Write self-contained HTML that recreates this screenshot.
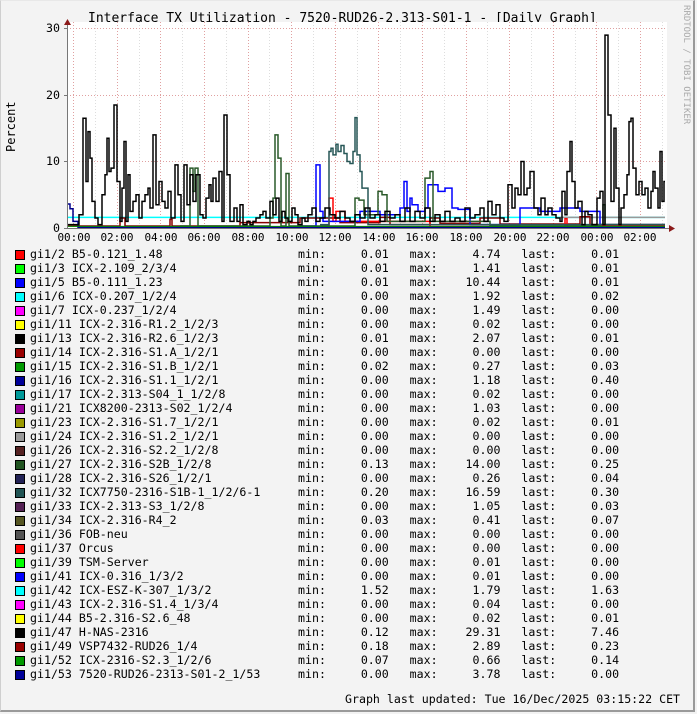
<!DOCTYPE html>
<html><head><meta charset="utf-8"><style>
html,body{margin:0;padding:0}
body{width:697px;height:714px;background:#f3f3f3;position:relative;overflow:hidden;font-family:"DejaVu Sans Mono","Liberation Mono",monospace;font-size:11.6px;color:#000}
.frame{position:absolute;left:0;top:0;width:695px;height:712px;border-right:2px solid #9a9a9a;border-bottom:2px solid #9a9a9a;border-left:1px solid #cfcfcf;border-top:1px solid #e8e8e8;box-sizing:border-box}
.t{position:absolute;white-space:pre;line-height:14px}
.sw{position:absolute;left:15px;width:8px;height:8px;border:1px solid #000}
.r{text-align:right}
.xl{position:absolute;top:231px;width:50px;margin-left:-25px;text-align:center;line-height:14px;font-size:11px}
</style></head><body>
<div class="frame"></div>
<div class="t" style="left:88px;top:12px;font-size:13px">Interface TX Utilization - 7520-RUD26-2.313-S01-1 - [Daily Graph]</div>
<div class="t" style="left:4px;top:152px;font-size:12px;transform:rotate(-90deg);transform-origin:0 0">Percent</div>
<div class="t" style="left:681px;top:5px;font-size:9px;color:#aaa;transform:rotate(90deg) translateY(-10px);transform-origin:0 0;line-height:10px">RRDTOOL / TOBI OETIKER</div>
<svg style="position:absolute;left:0;top:0" width="697" height="714">
<rect x="67" y="22" width="600" height="206" fill="#fff"/>
<g stroke="#ddd" stroke-dasharray="1,2" stroke-width="1">
<path d="M95.5 22V228M117.5 22V228M139.5 22V228M160.5 22V228M182.5 22V228M204.5 22V228M226.5 22V228M248.5 22V228M269.5 22V228M291.5 22V228M313.5 22V228M335.5 22V228M357.5 22V228M378.5 22V228M400.5 22V228M422.5 22V228M444.5 22V228M466.5 22V228M487.5 22V228M509.5 22V228M531.5 22V228M553.5 22V228M575.5 22V228M596.5 22V228M618.5 22V228M640.5 22V228M662.5 22V228"/>
</g>
<g stroke="#e0a0a0" stroke-dasharray="1,2"><path d="M67 28.5H667M67 95.5H667M67 161.5H667"/><path d="M73.5 22V228M117.5 22V228M160.5 22V228M204.5 22V228M248.5 22V228M291.5 22V228M335.5 22V228M378.5 22V228M422.5 22V228M466.5 22V228M509.5 22V228M553.5 22V228M596.5 22V228M640.5 22V228"/></g>
<g transform="translate(0,228) scale(1,-6.65)" fill="none" stroke-width="1.5">
<path vector-effect="non-scaling-stroke" stroke="#0ff" d="M67 1.6H665"/>
<path vector-effect="non-scaling-stroke" stroke="#999" d="M560 1.6H665"/>
<path vector-effect="non-scaling-stroke" stroke="#880000" d="M67 0.3H120V1.5H125V0.3H170V1.3H172V0.3H240V0.8H300V1.5H340V0.8H380V1.6H390V0.5H430V1.5H440V0.7H480V1.5H500V0.6H580V1.7H590V0.5H665"/>
<path vector-effect="non-scaling-stroke" stroke="#f00" d="M320 0.3H329V4.5H333V1H336V2.5H345V1H430V0.2H565V1.4H567V0.3H665"/>
<path vector-effect="non-scaling-stroke" stroke="#00008b" d="M67 3.6H70V2.9H73V1H78V0.1H665"/>
<path vector-effect="non-scaling-stroke" stroke="#00f" d="M300 0.3H316V9.5H320V2.5H323V1H360V2.5H380V2H400V3H404V7H407V2.5H410V4.5H412V3.5H418V2.5H425V3H428V6.5H438V5.5H445V6H452V3H458V2.8H470V0.5H520V3H540V2.5H560V3H580V2.5H600V0.5H665"/>
<path vector-effect="non-scaling-stroke" stroke="#2a5a2a" d="M180 0.3H190V9H193V5.5H195V9H198V0.3H270V1.5H273V4.5H275V14H278V10.5H281V0.3H286V8.2H289V0.3H355V4.5H359V4.2H364V2H378V5.5H382V5H387V1H425V7.5H430V8.5H433V1H490V0.3H600V0.5H603V3.5H605V0.5H665"/>
<path vector-effect="non-scaling-stroke" stroke="#275757" d="M320 0.5H329V11.5H331V12H333V11H336V12.6H338V11.5H341V12.4H344V11.2H347V10H350V9.7H353V11.5H355V16.6H357V11H360V8.5H362V6H368V0.5H665"/>
<path vector-effect="non-scaling-stroke" stroke="#000" d="M67 0.5H73V0.5H79V2H83V16.5H86V7H88V14.5H90V10.5H92V4H95V1.5H98V0.5H102V5H105V8H107V13.5H109V8.5H111V9H114V18.5H117V7H120V1H122V6H124V13H126V1H128V8H130V2.5H133V4H136V5H139V1.5H142V4H145V5H148V6H150V3H153V14H156V3.5H159V7H162V4H165V3H168V5.5H171V1.5H175V9.5H178V5H181V1H184V9.5H187V3.5H190V8H193V4H196V8H200V2H203V1.5H206V4.5H209V6.5H211V4H213V7.5H216V4H219V8.5H222V1H224V17H227V8H230V1H234V3H237V1H240V3.5H243V0.5H247V1H250V0.5H253V1H256V1.5H260V2H263V2.5H266V1.5H270V4H273V2H276V4.5H279V1H282V2.5H285V1.5H288V1H292V3H295V2H298V0.5H302V1.5H305V1H308V2H312V3H316V1H320V1.5H325V3H330V2H335V1.5H340V2.5H345V1.5H350V1H355V2H360V1.5H365V3H370V1.5H375V2H380V1H385V2.5H390V1.5H395V2H400V1H405V3H410V1H415V2.5H420V1.5H425V3H430V1H435V2H440V1H445V2.5H450V1H455V1.5H460V1H465V3H470V1.5H475V2H480V3H484V1H488V4H492V2H496V3.5H500V1.5H504V1H508V6.5H512V3H515V6H518V5H521V10H524V5H527V6H530V8.5H534V3H538V2H541V4.5H545V2H548V3H552V2H556V1.5H560V1H562V5.5H565V2H567V8.5H570V13H572V7H575V3H578V4H582V0.5H585V2.5H588V2H592V0.5H597V4.5H600V5.5H603V0.5H605V29H608V17H611V4H614V15H616V6H619V0.5H621V3H624V5H627V8H629V16H631V16.5H633V9H636V5H639V7H642V5H645V6H648V3H651V5.5H653V8.5H655V6H658V3H660V11.5H662V4H664V7H665"/>
<path vector-effect="non-scaling-stroke" stroke="#080" stroke-width="1" d="M67 0.25H665"/>
</g>
<path d="M67.5 24V229" stroke="#777"/><path d="M64 228.5H670" stroke="#777"/>
<path d="M64 25L67.5 19L71 25Z" fill="#8b1a1a"/><path d="M669 225L675 228.5L669 232Z" fill="#8b1a1a"/>
<g stroke="#777"><path d="M64 28.5H67M64 95.5H67M64 161.5H67"/></g>
</svg>
<div class="t r" style="left:30px;top:21px;width:30px">30</div>
<div class="t r" style="left:30px;top:88px;width:30px">20</div>
<div class="t r" style="left:30px;top:154px;width:30px">10</div>
<div class="t r" style="left:30px;top:221px;width:30px">0</div>
<div class="xl" style="left:74px">00:00</div><div class="xl" style="left:117px">02:00</div><div class="xl" style="left:161px">04:00</div><div class="xl" style="left:204px">06:00</div><div class="xl" style="left:248px">08:00</div><div class="xl" style="left:292px">10:00</div><div class="xl" style="left:335px">12:00</div><div class="xl" style="left:379px">14:00</div><div class="xl" style="left:422px">16:00</div><div class="xl" style="left:466px">18:00</div><div class="xl" style="left:510px">20:00</div><div class="xl" style="left:553px">22:00</div><div class="xl" style="left:597px">00:00</div><div class="xl" style="left:640px">02:00</div>
<div style="position:absolute;left:0;top:247px">
<div class="sw" style="top:3px;background:#f00"></div><div class="sw" style="top:17px;background:#0f0"></div><div class="sw" style="top:31px;background:#00f"></div><div class="sw" style="top:45px;background:#0ff"></div><div class="sw" style="top:59px;background:#f0f"></div><div class="sw" style="top:73px;background:#ff0"></div><div class="sw" style="top:87px;background:#000"></div><div class="sw" style="top:101px;background:#900"></div><div class="sw" style="top:115px;background:#090"></div><div class="sw" style="top:129px;background:#009"></div><div class="sw" style="top:143px;background:#099"></div><div class="sw" style="top:157px;background:#909"></div><div class="sw" style="top:171px;background:#990"></div><div class="sw" style="top:185px;background:#999"></div><div class="sw" style="top:199px;background:#522"></div><div class="sw" style="top:213px;background:#252"></div><div class="sw" style="top:227px;background:#225"></div><div class="sw" style="top:241px;background:#255"></div><div class="sw" style="top:255px;background:#525"></div><div class="sw" style="top:269px;background:#552"></div><div class="sw" style="top:283px;background:#555"></div><div class="sw" style="top:297px;background:#f00"></div><div class="sw" style="top:311px;background:#0f0"></div><div class="sw" style="top:325px;background:#00f"></div><div class="sw" style="top:339px;background:#0ff"></div><div class="sw" style="top:353px;background:#f0f"></div><div class="sw" style="top:367px;background:#ff0"></div><div class="sw" style="top:381px;background:#000"></div><div class="sw" style="top:395px;background:#900"></div><div class="sw" style="top:409px;background:#090"></div><div class="sw" style="top:423px;background:#009"></div>
<div class="t" style="left:30px;top:0">gi1/2 B5-0.121_1.48
gi1/3 ICX-2.109_2/3/4
gi1/5 B5-0.111_1.23
gi1/6 ICX-0.207_1/2/4
gi1/7 ICX-0.237_1/2/4
gi1/11 ICX-2.316-R1.2_1/2/3
gi1/13 ICX-2.316-R2.6_1/2/3
gi1/14 ICX-2.316-S1.A_1/2/1
gi1/15 ICX-2.316-S1.B_1/2/1
gi1/16 ICX-2.316-S1.1_1/2/1
gi1/17 ICX-2.313-S04_1_1/2/8
gi1/21 ICX8200-2313-S02_1/2/4
gi1/23 ICX-2.316-S1.7_1/2/1
gi1/24 ICX-2.316-S1.2_1/2/1
gi1/26 ICX-2.316-S2.2_1/2/8
gi1/27 ICX-2.316-S2B_1/2/8
gi1/28 ICX-2.316-S26_1/2/1
gi1/32 ICX7750-2316-S1B-1_1/2/6-1
gi1/33 ICX-2.313-S3_1/2/8
gi1/34 ICX-2.316-R4_2
gi1/36 FOB-neu
gi1/37 Orcus
gi1/39 TSM-Server
gi1/41 ICX-0.316_1/3/2
gi1/42 ICX-ESZ-K-307_1/3/2
gi1/43 ICX-2.316-S1.4_1/3/4
gi1/44 B5-2.316-S2.6_48
gi1/47 H-NAS-2316
gi1/49 VSP7432-RUD26_1/4
gi1/52 ICX-2316-S2.3_1/2/6
gi1/53 7520-RUD26-2313-S01-2_1/53</div>
<div class="t" style="left:298px;top:0">min:     0.01   max:     4.74   last:     0.01
min:     0.01   max:     1.41   last:     0.01
min:     0.01   max:    10.44   last:     0.01
min:     0.00   max:     1.92   last:     0.02
min:     0.00   max:     1.49   last:     0.00
min:     0.00   max:     0.02   last:     0.00
min:     0.01   max:     2.07   last:     0.01
min:     0.00   max:     0.00   last:     0.00
min:     0.02   max:     0.27   last:     0.03
min:     0.00   max:     1.18   last:     0.40
min:     0.00   max:     0.02   last:     0.00
min:     0.00   max:     1.03   last:     0.00
min:     0.00   max:     0.02   last:     0.01
min:     0.00   max:     0.00   last:     0.00
min:     0.00   max:     0.00   last:     0.00
min:     0.13   max:    14.00   last:     0.25
min:     0.00   max:     0.26   last:     0.04
min:     0.20   max:    16.59   last:     0.30
min:     0.00   max:     1.05   last:     0.03
min:     0.03   max:     0.41   last:     0.07
min:     0.00   max:     0.00   last:     0.00
min:     0.00   max:     0.00   last:     0.00
min:     0.00   max:     0.01   last:     0.00
min:     0.00   max:     0.01   last:     0.00
min:     1.52   max:     1.79   last:     1.63
min:     0.00   max:     0.04   last:     0.00
min:     0.00   max:     0.02   last:     0.01
min:     0.12   max:    29.31   last:     7.46
min:     0.18   max:     2.89   last:     0.23
min:     0.07   max:     0.66   last:     0.14
min:     0.00   max:     3.78   last:     0.00</div>
</div>
<div class="t" style="left:345px;top:692px">Graph last updated: Tue 16/Dec/2025 03:15:22 CET</div>
</body></html>
